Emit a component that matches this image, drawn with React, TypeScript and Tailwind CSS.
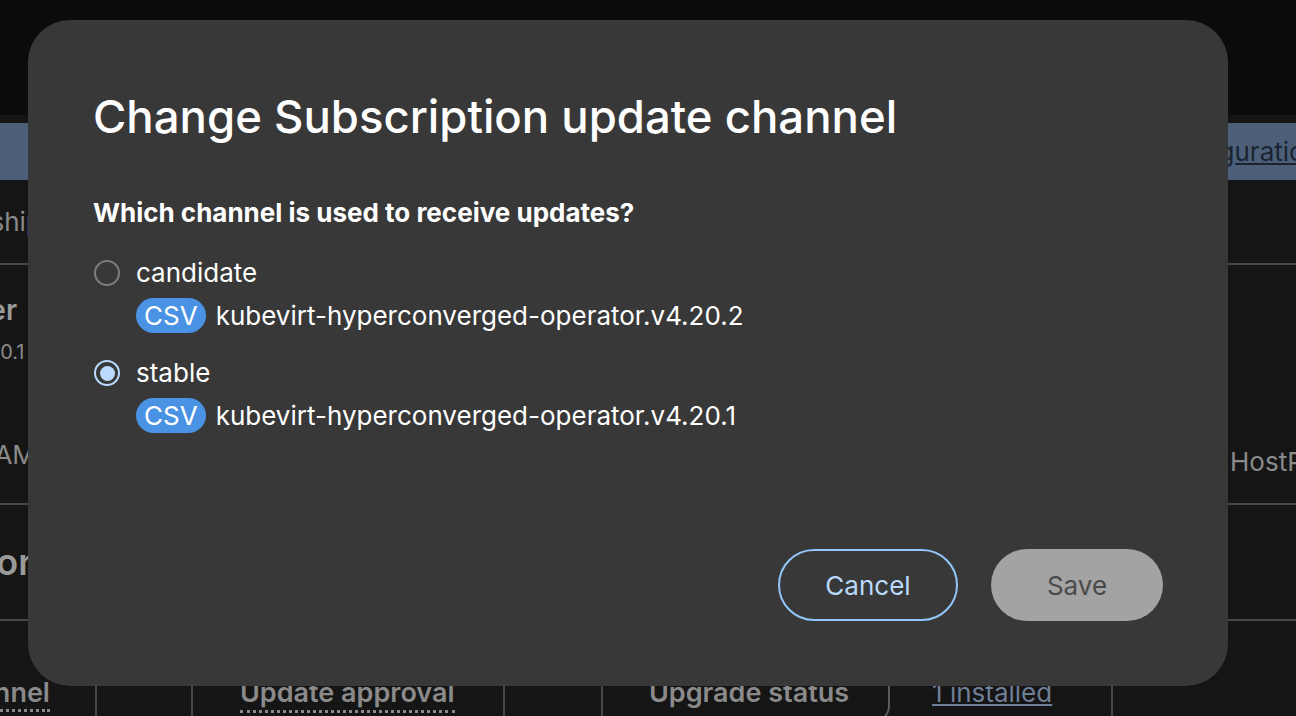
import React from "react";

const font = { fontFamily: "Inter, 'Noto Sans', sans-serif" };

const channels = [
  { name: "candidate", csv: "kubevirt-hyperconverged-operator.v4.20.2", checked: false },
  { name: "stable", csv: "kubevirt-hyperconverged-operator.v4.20.1", checked: true },
];

const Radio: React.FC<{ checked: boolean }> = ({ checked }) =>
  checked ? (
    <span className="flex h-[26px] w-[26px] shrink-0 items-center justify-center rounded-full border-2 border-[#b9dafc]">
      <span className="h-[15px] w-[15px] rounded-full bg-[#b9dafc]" />
    </span>
  ) : (
    <span className="h-[26px] w-[26px] shrink-0 rounded-full border-2 border-[#7d7d7d]" />
  );

// page behind the modal, mostly hidden by it
const Backdrop: React.FC = () => (
  <div className="flex h-full flex-col text-[#8a8a8a]">
    <div className="h-[115px] bg-[#0b0b0b]" />
    <div className="h-[8px] bg-[#151515]" />
    <div className="flex h-[57px] items-center justify-end overflow-hidden bg-[#4c5f78]">
      <span className="mr-[-24px] whitespace-nowrap text-[26px] text-[#1b2330] underline">
        Configuration
      </span>
    </div>

    <div className="flex h-[85px] items-center border-b-2 border-[#474747]">
      <div className="w-[28px] overflow-hidden">
        <span className="-ml-[91px] block whitespace-nowrap text-[26px]">Ownership</span>
      </div>
    </div>

    <div className="flex h-[240px] justify-between border-b-2 border-[#474747]">
      <div className="flex w-[28px] flex-col overflow-hidden whitespace-nowrap">
        <span className="-ml-[97px] mt-[24px] block text-[28px] font-semibold text-[#9a9a9a]">
          Provider
        </span>
        <span className="-ml-[30px] mt-[6px] block text-[20px]">4.20.1 provided</span>
        <span className="-ml-[80px] mt-[68px] block text-[26px]">12:04 AM</span>
      </div>
      <div className="flex w-[68px] items-end overflow-hidden pb-[22px]">
        <span className="ml-[2px] whitespace-nowrap text-[26px]">HostPathProvisioner</span>
      </div>
    </div>

    <div className="flex h-[116px] items-center border-b-2 border-[#474747]">
      <div className="w-[28px] overflow-hidden">
        <span className="-ml-[181px] block whitespace-nowrap text-[36px] font-semibold text-[#9a9a9a]">
          Subscription
        </span>
      </div>
    </div>

    <div className="flex flex-1 text-[27px] font-semibold">
      <div className="w-[97px] overflow-hidden border-r-2 border-[#474747] pt-[52px]">
        <span className="-ml-[155px] whitespace-nowrap border-b-[3px] border-dotted border-[#8a8a8a]">
          Update channel
        </span>
      </div>
      <div className="w-[96px] border-r-2 border-[#474747]" />
      <div className="w-[312px] border-r-2 border-[#474747] pl-[47px] pt-[52px]">
        <span className="whitespace-nowrap border-b-[3px] border-dotted border-[#8a8a8a] pb-[1px]">
          Update approval
        </span>
      </div>
      <div className="w-[98px] border-r-2 border-[#474747]" />
      <div className="mb-[-6px] w-[287px] rounded-br-[16px] border-r-2 border-b-2 border-[#5a5a5a] pl-[46px] pt-[52px]">
        <span className="whitespace-nowrap">Upgrade status</span>
      </div>
      <div className="w-[223px] border-r-2 border-[#474747] pl-[42px] pt-[52px]">
        <span className="whitespace-nowrap text-[26px] font-normal text-[#6f7f96] underline">
          1 installed
        </span>
      </div>
    </div>
  </div>
);

export default function App() {
  return (
    <div className="relative h-[716px] w-[1296px] overflow-hidden bg-[#151515]" style={font}>
      <Backdrop />

      <div className="absolute left-[28px] top-[20px] flex h-[666px] w-[1200px] flex-col rounded-[42px] bg-[#383838] px-[65px] pb-[65px] pt-[69px] text-white">
        <h1 className="text-[45.5px] font-medium leading-[56px]">
          Change Subscription update channel
        </h1>
        <p className="mt-[50px] text-[26px] font-bold leading-[36px]">
          Which channel is used to receive updates?
        </p>

        <div className="mt-[24px] flex flex-col gap-[22px]">
          {channels.map((c) => (
            <div key={c.name} className="flex flex-col gap-[7px]">
              <label className="flex h-[36px] items-center gap-[16px] pl-[1px]">
                <Radio checked={c.checked} />
                <span className="text-[26px] leading-[36px]">{c.name}</span>
              </label>
              <div className="flex h-[35px] items-center gap-[10px] pl-[43px]">
                <span className="flex h-[35px] items-center rounded-full bg-[#4a92e4] px-[8px] text-[26px] leading-[35px]">
                  CSV
                </span>
                <span className="text-[26px] leading-[35px]">{c.csv}</span>
              </div>
            </div>
          ))}
        </div>

        <div className="mt-auto flex justify-end gap-[33px]">
          <button className="h-[72px] w-[180px] rounded-full border-2 border-[#92c5f9] text-[26px] text-[#b9dafc]">
            Cancel
          </button>
          <button className="h-[72px] w-[172px] rounded-full bg-[#a3a3a3] text-[26px] text-[#4a4a4a]">
            Save
          </button>
        </div>
      </div>
    </div>
  );
}
